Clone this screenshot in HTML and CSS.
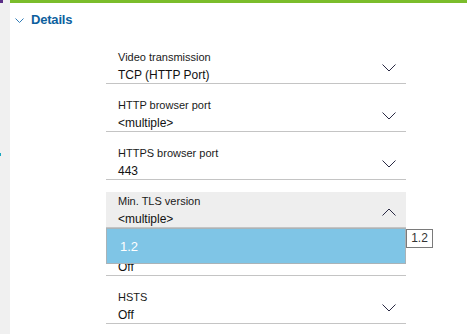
FILE: index.html
```html
<!DOCTYPE html>
<html lang="en">
<head>
  <meta charset="UTF-8" />
  <title>Details</title>
  <link rel="stylesheet" href="styles.css">
</head>
<body>
  <div class="page">
    <!-- left rail -->
    <div class="rail">
      <span class="rail-mark"></span>
      <span class="rail-tick"></span>
    </div>

    <div class="panel">
      <div class="section-head">
        <svg class="head-chev" width="9" height="5" viewBox="0 0 9 5"><polyline points="0.5,0.5 4.5,4.5 8.5,0.5" /></svg>
        <span>Details</span>
      </div>

      <div class="fields">
        <div class="field">
          <div class="field-text">
            <div class="label">Video transmission</div>
            <div class="value">TCP (HTTP Port)</div>
          </div>
          <svg class="chev" width="14" height="8" viewBox="0 0 14 8"><polyline points="0.5,0.5 7,7 13.5,0.5" /></svg>
        </div>

        <div class="field">
          <div class="field-text">
            <div class="label">HTTP browser port</div>
            <div class="value">&lt;multiple&gt;</div>
          </div>
          <svg class="chev" width="14" height="8" viewBox="0 0 14 8"><polyline points="0.5,0.5 7,7 13.5,0.5" /></svg>
        </div>

        <div class="field">
          <div class="field-text">
            <div class="label">HTTPS browser port</div>
            <div class="value">443</div>
          </div>
          <svg class="chev" width="14" height="8" viewBox="0 0 14 8"><polyline points="0.5,0.5 7,7 13.5,0.5" /></svg>
        </div>

        <div class="field open">
          <div class="field-text">
            <div class="label">Min. TLS version</div>
            <div class="value">&lt;multiple&gt;</div>
          </div>
          <svg class="chev" width="14" height="8" viewBox="0 0 14 8"><polyline points="0.5,7.5 7,1 13.5,7.5" /></svg>

          <!-- open list -->
          <div class="dropdown">
            <div class="option">1.2</div>
          </div>
          <div class="tip">1.2</div>
        </div>

        <div class="field">
          <div class="field-text">
            <div class="label">HTTP/2</div>
            <div class="value">Off</div>
          </div>
          <svg class="chev" width="14" height="8" viewBox="0 0 14 8"><polyline points="0.5,0.5 7,7 13.5,0.5" /></svg>
        </div>

        <div class="field">
          <div class="field-text">
            <div class="label">HSTS</div>
            <div class="value">Off</div>
          </div>
          <svg class="chev" width="14" height="8" viewBox="0 0 14 8"><polyline points="0.5,0.5 7,7 13.5,0.5" /></svg>
        </div>
      </div>
    </div>
  </div>
</body>
</html>
```

FILE: styles.css
```css
body {
  margin: 0;
  font-family: 'Liberation Sans', Arial, sans-serif;
  background: #ffffff;
  color: #111111;
}
.page {
  display: flex;
  height: 334px;
  overflow: hidden;
}
.rail {
  position: relative;
  width: 10px;
  flex: none;
  background: #f0f0f0;
}
.rail-mark {
  position: absolute;
  top: 0;
  left: 0;
  width: 3px;
  height: 3px;
  background: #5a2d86;
}
.rail-tick {
  position: absolute;
  top: 153px;
  left: 0;
  width: 1px;
  height: 3px;
  background: #18a7c0;
}
.panel {
  flex: 1;
  border-top: 3px solid #7bbd2b;
}
.section-head {
  display: flex;
  align-items: center;
  padding: 9px 0 0 5px;
  height: 16px;
  font-size: 13px;
  line-height: 16px;
  font-weight: bold;
  letter-spacing: -0.2px;
  color: #0d5f9e;
}
.head-chev {
  margin: 1px 7px 0 0;
  fill: none;
  stroke: #2f7bb6;
  stroke-width: 1;
}
.fields {
  margin: 20px 0 0 96px;
  width: 300px;
}
.field {
  position: relative;
  display: flex;
  align-items: center;
  height: 35px;
  padding: 0 10px 0 12px;
  border-bottom: 1px solid #c4c4c4;
  margin-bottom: 12px;
}
.field-text {
  flex: 1;
  align-self: flex-start;
  padding-top: 2px;
}
.label {
  font-size: 11px;
  line-height: 14px;
  color: #1a1a1a;
}
.value {
  margin-top: 3px;
  font-size: 12px;
  line-height: 16px;
  color: #111111;
}
.chev {
  margin-top: 4px;
  fill: none;
  stroke: #2a2a44;
  stroke-width: 1;
}
.field.open {
  background: #eeeeee;
  z-index: 2;
}
.dropdown {
  position: absolute;
  top: 36px;
  left: 0;
  width: 298px;
  height: 34px;
  background: #7fc5e6;
  border: 1px solid #a9b3b8;
}
.option {
  padding: 10px 0 0 13px;
  font-size: 13px;
  line-height: 16px;
  color: #ffffff;
}
.tip {
  position: absolute;
  top: 37px;
  left: 300px;
  width: 25px;
  height: 17px;
  border: 1px solid #7a7a7a;
  background: #ffffff;
  font-size: 12px;
  line-height: 17px;
  text-align: center;
  color: #333333;
}
```
